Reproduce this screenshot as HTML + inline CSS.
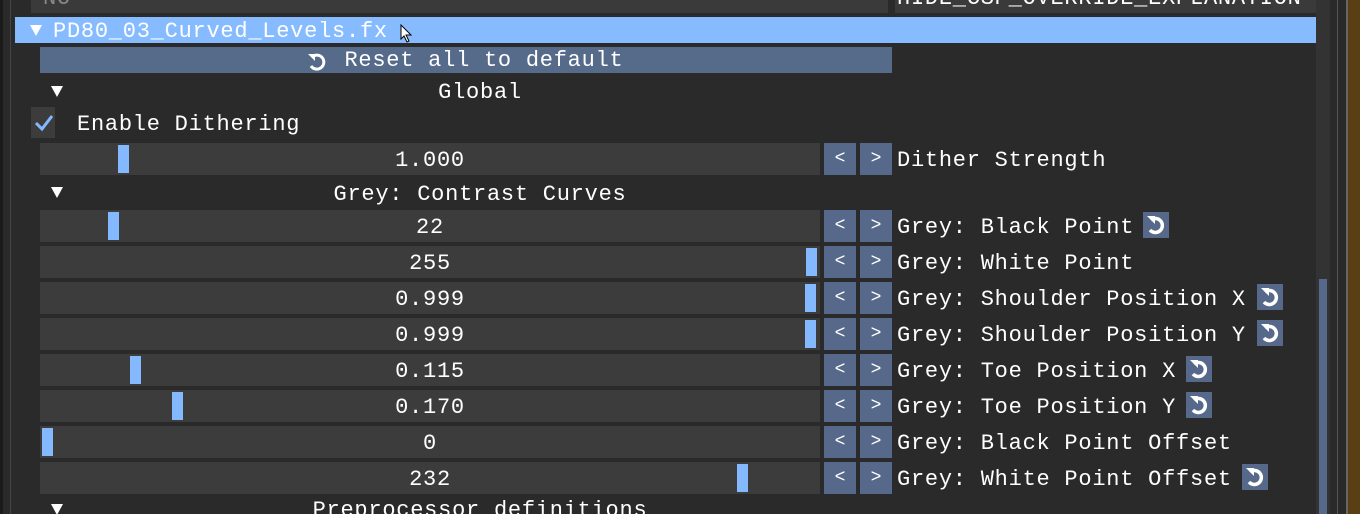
<!DOCTYPE html>
<html><head><meta charset="utf-8"><style>
*{margin:0;padding:0;box-sizing:border-box}
html,body{width:1360px;height:514px;overflow:hidden}
body{background:#2a2a2a;position:relative;font-family:"Liberation Mono","DejaVu Sans Mono",monospace;font-size:22px;letter-spacing:0.75px;color:#fff}
.a{position:absolute}
.sl{position:absolute;left:40px;width:780px;height:32px;background:#3c3c3c;text-align:center;line-height:35px}
.g{position:absolute;top:2px;width:11px;height:28px;background:#84b8ff}
.b{position:absolute;width:32px;height:32px;background:#56698a;text-align:center;line-height:33px;font-size:18px;letter-spacing:0}
.lb{position:absolute;left:897px;line-height:35px;white-space:pre}
.r{position:absolute;width:26px;height:26px;background:#56698a}
.hd{position:absolute;left:0;width:960px;text-align:center;line-height:28px;white-space:pre}
.tri{position:absolute;left:51px;width:0;height:0;border-left:6px solid transparent;border-right:6px solid transparent;border-top:11px solid #fff}
</style></head><body>
<div class="a" style="left:0;top:0;width:3px;height:514px;background:#1a1a1a"></div>
<div class="a" style="left:10px;top:0;width:1px;height:514px;background:#444"></div>
<div class="a" style="left:31px;top:0;width:857px;height:13px;background:#3a3a3a;overflow:hidden"><span style="position:absolute;left:12px;top:-14px;color:#888">NO</span></div>
<div class="a" style="left:895px;top:0;width:421px;height:13px;background:#3a3a3a;overflow:hidden"><span style="position:absolute;left:2px;top:-14px;white-space:pre">HIDE_CSP_OVERRIDE_EXPLANATION</span></div>
<div class="a" style="left:15px;top:17px;width:1301px;height:26px;background:#86bcff"></div>
<div class="tri" style="left:30px;top:25px"></div>
<div class="a" style="left:53px;top:18px;line-height:28px;white-space:pre">PD80_03_Curved_Levels.fx</div>
<svg class="a" style="left:400px;top:24px" width="14" height="20"><path d="M1 1 L1 15 L4 12 L7 18 L9 17 L6 11 L11 11 Z" fill="#fff" stroke="#000" stroke-width="1"/></svg>
<div class="a" style="left:40px;top:47px;width:852px;height:26px;background:#566a8a;text-align:center;line-height:28px;white-space:pre"><span style="display:inline-block;width:22px"></span> Reset all to default</div>
<svg class="a" style="left:305px;top:50px" width="24" height="24"><path d="M7 7 A7 7 0 1 1 6 16" fill="none" stroke="#fff" stroke-width="3"/><path d="M3 4 L10 4 L10 11 Z" fill="#fff"/></svg>
<div class="tri" style="top:86px"></div>
<div class="hd" style="top:79px">Global</div>
<div class="a" style="left:31px;top:107px;width:24px;height:31px;background:#3c3c3c"></div>
<svg class="a" style="left:34px;top:113px" width="20" height="20"><path d="M2 10 L8 16 L18 3" fill="none" stroke="#84b8ff" stroke-width="3"/></svg>
<div class="a" style="left:77px;top:108px;line-height:34px;white-space:pre">Enable Dithering</div>

<div class="sl" style="top:143px">1.000<div class="g" style="left:78px"></div></div>
<div class="b" style="left:824px;top:143px">&lt;</div><div class="b" style="left:860px;top:143px">&gt;</div>
<div class="lb" style="top:143px">Dither Strength</div>

<div class="tri" style="top:187px"></div>
<div class="hd" style="top:181px">Grey: Contrast Curves</div>

<div class="sl" style="top:210px">22<div class="g" style="left:68px"></div></div>
<div class="b" style="left:824px;top:210px">&lt;</div><div class="b" style="left:860px;top:210px">&gt;</div>
<div class="lb" style="top:210px">Grey: Black Point</div>
<div class="r" style="left:1143px;top:212px"></div>

<div class="sl" style="top:246px">255<div class="g" style="left:766px"></div></div>
<div class="b" style="left:824px;top:246px">&lt;</div><div class="b" style="left:860px;top:246px">&gt;</div>
<div class="lb" style="top:246px">Grey: White Point</div>

<div class="sl" style="top:282px">0.999<div class="g" style="left:765px"></div></div>
<div class="b" style="left:824px;top:282px">&lt;</div><div class="b" style="left:860px;top:282px">&gt;</div>
<div class="lb" style="top:282px">Grey: Shoulder Position X</div>
<div class="r" style="left:1257px;top:284px"></div>

<div class="sl" style="top:318px">0.999<div class="g" style="left:765px"></div></div>
<div class="b" style="left:824px;top:318px">&lt;</div><div class="b" style="left:860px;top:318px">&gt;</div>
<div class="lb" style="top:318px">Grey: Shoulder Position Y</div>
<div class="r" style="left:1257px;top:320px"></div>

<div class="sl" style="top:354px">0.115<div class="g" style="left:90px"></div></div>
<div class="b" style="left:824px;top:354px">&lt;</div><div class="b" style="left:860px;top:354px">&gt;</div>
<div class="lb" style="top:354px">Grey: Toe Position X</div>
<div class="r" style="left:1186px;top:356px"></div>

<div class="sl" style="top:390px">0.170<div class="g" style="left:132px"></div></div>
<div class="b" style="left:824px;top:390px">&lt;</div><div class="b" style="left:860px;top:390px">&gt;</div>
<div class="lb" style="top:390px">Grey: Toe Position Y</div>
<div class="r" style="left:1186px;top:392px"></div>

<div class="sl" style="top:426px">0<div class="g" style="left:2px"></div></div>
<div class="b" style="left:824px;top:426px">&lt;</div><div class="b" style="left:860px;top:426px">&gt;</div>
<div class="lb" style="top:426px">Grey: Black Point Offset</div>

<div class="sl" style="top:462px">232<div class="g" style="left:697px"></div></div>
<div class="b" style="left:824px;top:462px">&lt;</div><div class="b" style="left:860px;top:462px">&gt;</div>
<div class="lb" style="top:462px">Grey: White Point Offset</div>
<div class="r" style="left:1242px;top:464px"></div>

<div class="tri" style="top:504px"></div>
<div class="hd" style="top:497px">Preprocessor definitions</div>

<div class="a" style="left:1316px;top:0;width:14px;height:514px;background:#333"></div>
<div class="a" style="left:1319px;top:279px;width:8px;height:235px;background:#56698a"></div>
<div class="a" style="left:1337px;top:0;width:1px;height:514px;background:#555"></div>
<div class="a" style="left:1346px;top:0;width:2px;height:514px;background:#666"></div>
<div class="a" style="left:1348px;top:0;width:12px;height:514px;background:#5a3e14"></div>
<svg class="a" style="left:0;top:0" width="1360" height="514">
<defs><g id="ri"><path d="M8 8 A7 7 0 1 1 7 18" fill="none" stroke="#fff" stroke-width="3.5"/><path d="M4 4 L12 4 L12 12 Z" fill="#fff"/></g></defs>
<use href="#ri" x="1143" y="212"/><use href="#ri" x="1257" y="284"/><use href="#ri" x="1257" y="320"/><use href="#ri" x="1186" y="356"/><use href="#ri" x="1186" y="392"/><use href="#ri" x="1242" y="464"/>
</svg>
</body></html>
